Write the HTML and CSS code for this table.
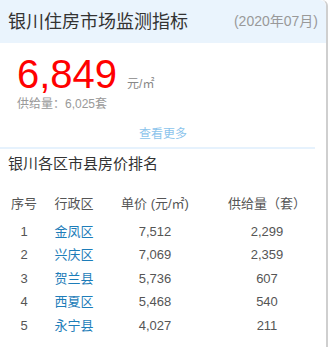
FILE: index.html
```html
<!DOCTYPE html>
<html lang="zh-CN">
<head>
<meta charset="utf-8">
<title>银川住房市场监测指标</title>
<link rel="stylesheet" href="styles.css">
</head>
<body>
<div class="card">
  <div class="header">
    <span class="title">银川住房市场监测指标</span>
    <span class="date">(2020年07月)</span>
  </div>
  <div class="summary">
    <div class="price-line">
      <span class="price">6,849</span>
      <span class="unit">元/㎡</span>
    </div>
    <div class="supply">供给量：6,025套</div>
  </div>
  <div class="more"><a href="#">查看更多</a></div>
  <div class="divider"></div>
  <div class="rank-title">银川各区市县房价排名</div>
  <div class="table">
    <div class="row head">
      <span>序号</span><span>行政区</span><span>单价 (元/㎡)</span><span>供给量（套）</span>
    </div>
    <div class="row"><span>1</span><a href="#">金凤区</a><span>7,512</span><span>2,299</span></div>
    <div class="row"><span>2</span><a href="#">兴庆区</a><span>7,069</span><span>2,359</span></div>
    <div class="row"><span>3</span><a href="#">贺兰县</a><span>5,736</span><span>607</span></div>
    <div class="row"><span>4</span><a href="#">西夏区</a><span>5,468</span><span>540</span></div>
    <div class="row"><span>5</span><a href="#">永宁县</a><span>4,027</span><span>211</span></div>
  </div>
</div>
</body>
</html>
```

FILE: styles.css
```css
html, body {
  margin: 0;
  padding: 0;
  background: #fff;
}
body {
  font-family: "Liberation Sans", "Noto Sans CJK SC", sans-serif;
  color: #555;
}
.card {
  width: 326px;
  height: 347px;
  border-right: 2px solid #cfcfcf;
  border-top-right-radius: 6px;
  box-sizing: content-box;
  background: #fff;
  overflow: hidden;
}
.header {
  height: 43px;
  background: #eaf4fd;
  display: flex;
  align-items: center;
  justify-content: space-between;
  padding: 0 8px 4px 8px;
  box-sizing: border-box;
  border-top-right-radius: 6px;
}
.title {
  font-size: 18px;
  color: #333;
}
.date {
  font-size: 14px;
  color: #999;
}
.summary {
  padding: 13px 0 0 17px;
}
.price-line {
  display: flex;
  align-items: baseline;
  height: 36px;
}
.price {
  font-size: 40px;
  line-height: 36px;
  color: #ff0000;
}
.unit {
  font-size: 12px;
  color: #888;
  margin-left: 10px;
}
.supply {
  font-size: 12px;
  line-height: 16px;
  color: #999;
  margin-top: 4px;
}
.more {
  text-align: center;
  font-size: 12px;
  line-height: 16px;
  margin-top: 14px;
}
.more a {
  color: #8cc4ec;
  text-decoration: none;
}
.divider {
  width: 315px;
  height: 2px;
  background: #e6f2fd;
  margin-top: 5px;
}
.rank-title {
  font-size: 15px;
  line-height: 20px;
  color: #333;
  padding-left: 8px;
  margin-top: 5px;
}
.table {
  margin-top: 22px;
}
.row {
  display: grid;
  grid-template-columns: 48px 52px 110px 114px;
  height: 23.5px;
  align-items: center;
  font-size: 13px;
  color: #555;
}
.row.head {
  height: 24px;
  align-items: start;
}
.row > * {
  text-align: center;
  line-height: 16px;
}
.row a {
  color: #1d7db9;
  text-decoration: none;
}
```
